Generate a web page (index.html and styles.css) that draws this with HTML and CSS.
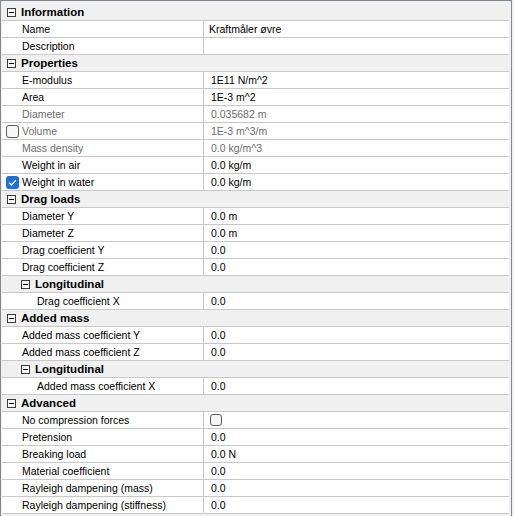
FILE: index.html
```html
<!DOCTYPE html>
<html>
<head>
<meta charset="utf-8">
<link rel="stylesheet" href="styles.css">
</head>
<body>
<div class="grid">
  <div class="cat"><span class="exp"></span>Information</div>
  <div class="row"><div class="lab"><span class="gut"></span>Name</div><div class="val v2">Kraftmåler øvre</div></div>
  <div class="row"><div class="lab"><span class="gut"></span>Description</div><div class="val"></div></div>

  <div class="cat"><span class="exp"></span>Properties</div>
  <div class="row"><div class="lab"><span class="gut"></span>E-modulus</div><div class="val">1E11 N/m^2</div></div>
  <div class="row"><div class="lab"><span class="gut"></span>Area</div><div class="val">1E-3 m^2</div></div>
  <div class="row dis"><div class="lab"><span class="gut"></span>Diameter</div><div class="val">0.035682 m</div></div>
  <div class="row dis"><div class="lab"><span class="gut"><span class="cb"></span></span>Volume</div><div class="val">1E-3 m^3/m</div></div>
  <div class="row dis"><div class="lab"><span class="gut"></span>Mass density</div><div class="val">0.0 kg/m^3</div></div>
  <div class="row"><div class="lab"><span class="gut"></span>Weight in air</div><div class="val">0.0 kg/m</div></div>
  <div class="row"><div class="lab"><span class="gut"><span class="cb on"><svg width="13" height="13" viewBox="0 0 13 13"><path d="M3.2 6.8 L5.4 9 L9.8 4.3" fill="none" stroke="#fff" stroke-width="1.3"/></svg></span></span>Weight in water</div><div class="val">0.0 kg/m</div></div>

  <div class="cat"><span class="exp"></span>Drag loads</div>
  <div class="row"><div class="lab"><span class="gut"></span>Diameter Y</div><div class="val">0.0 m</div></div>
  <div class="row"><div class="lab"><span class="gut"></span>Diameter Z</div><div class="val">0.0 m</div></div>
  <div class="row"><div class="lab"><span class="gut"></span>Drag coefficient Y</div><div class="val">0.0</div></div>
  <div class="row"><div class="lab"><span class="gut"></span>Drag coefficient Z</div><div class="val">0.0</div></div>
  <div class="cat sub"><span class="exp"></span>Longitudinal</div>
  <div class="row"><div class="lab"><span class="gut deep"></span>Drag coefficient X</div><div class="val">0.0</div></div>

  <div class="cat"><span class="exp"></span>Added mass</div>
  <div class="row"><div class="lab"><span class="gut"></span>Added mass coefficient Y</div><div class="val">0.0</div></div>
  <div class="row"><div class="lab"><span class="gut"></span>Added mass coefficient Z</div><div class="val">0.0</div></div>
  <div class="cat sub"><span class="exp"></span>Longitudinal</div>
  <div class="row"><div class="lab"><span class="gut deep"></span>Added mass coefficient X</div><div class="val">0.0</div></div>

  <div class="cat"><span class="exp"></span>Advanced</div>
  <div class="row"><div class="lab"><span class="gut"></span>No compression forces</div><div class="val"><span class="cb vcb"></span></div></div>
  <div class="row"><div class="lab"><span class="gut"></span>Pretension</div><div class="val">0.0</div></div>
  <div class="row"><div class="lab"><span class="gut"></span>Breaking load</div><div class="val">0.0 N</div></div>
  <div class="row"><div class="lab"><span class="gut"></span>Material coefficient</div><div class="val">0.0</div></div>
  <div class="row"><div class="lab"><span class="gut"></span>Rayleigh dampening (mass)</div><div class="val">0.0</div></div>
  <div class="row"><div class="lab"><span class="gut"></span>Rayleigh dampening (stiffness)</div><div class="val">0.0</div></div>
</div>
</body>
</html>
```

FILE: styles.css
```css
html, body {
  margin: 0;
  padding: 0;
  background: #f0f0f0;
}
body {
  font-family: "Liberation Sans", Arial, sans-serif;
  font-size: 10.5px;
  color: #000;
}
.grid {
  box-sizing: border-box;
  width: 512px;
  min-height: 516px;
  border: 1px solid #828790;
  border-bottom: none;
  padding: 3px 2px 0 1px;
  background: #f0f0f0;
}
.cat {
  height: 16px;
  line-height: 16px;
  border-bottom: 1px solid #c8c8c8;
  background: #f0f0f0;
  font-weight: bold;
  font-size: 11.5px;
  display: flex;
  align-items: center;
  padding-left: 5px;
}
.cat.sub {
  padding-left: 19px;
}
.exp {
  box-sizing: border-box;
  width: 9px;
  height: 9px;
  border: 1px solid #3c3c3c;
  margin-right: 5px;
  margin-top: 1px;
  position: relative;
  flex: none;
  background: #fff;
}
.exp::after {
  content: "";
  position: absolute;
  left: 1px;
  right: 1px;
  top: 3px;
  height: 1px;
  background: #000;
}
.row {
  display: flex;
  height: 16px;
  line-height: 16px;
  border-bottom: 1px solid #c8c8c8;
  background: #fff;
}
.lab {
  width: 201px;
  flex: none;
  border-right: 1px solid #c8c8c8;
  display: flex;
  align-items: center;
  white-space: nowrap;
}
.gut {
  width: 20px;
  height: 16px;
  flex: none;
  display: flex;
  align-items: center;
}
.gut.deep {
  width: 35px;
}
.val {
  flex: 1;
  padding-left: 7px;
  display: flex;
  align-items: center;
  white-space: nowrap;
}
.val.v2 {
  padding-left: 5px;
}
.dis {
  color: #6d6d6d;
}
.cb {
  box-sizing: border-box;
  display: block;
  width: 13px;
  height: 13px;
  margin-left: 4px;
  border: 1px solid #5a5a5a;
  border-radius: 3px;
  background: #f7f7f7;
}
.cb.on {
  border: none;
  background: #1f6fd6;
}
.cb.on svg {
  display: block;
}
.vcb {
  margin-left: -1px;
  width: 12px;
  height: 12px;
}
```
